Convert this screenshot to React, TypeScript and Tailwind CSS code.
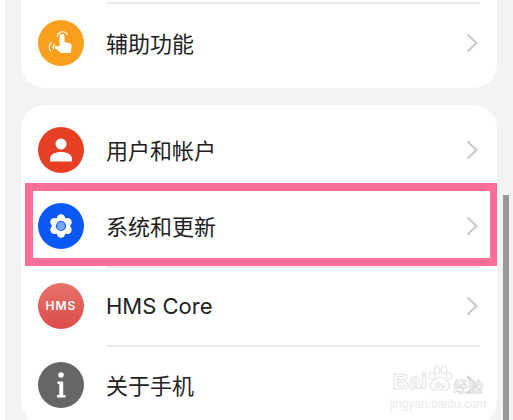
import type { ReactNode } from "react";

function Chevron() {
  return (
    <svg viewBox="0 0 12 20" className="h-[20px] w-[12px] shrink-0" fill="none" stroke="#c6c6c6" strokeWidth="1.800">
      <path d="M1.500 1.500L10.500 10L1.500 18.500" />
    </svg>
  );
}

function Row({ icon, label, height, divider, center, latin }: { icon: ReactNode; label: string; height: string; divider?: boolean; center?: string; latin?: boolean }) {
  return (
    <div className={`flex flex-col ${height}`}>
      {divider && <div className="ml-[85px] mr-[17px] h-[2px] bg-[#ebebeb]"></div>}
      <div className={`flex flex-1 items-center pl-[17px] pr-[19px] ${center ?? ""}`}>
        <div className="flex h-[46px] w-[46px] shrink-0 items-center justify-center rounded-full">{icon}</div>
        <span className={`ml-[22px] flex-1 text-[22px] leading-none text-[#222222] ${latin ? "font-[Inter]" : "pb-[3px]"}`}>{label}</span>
        <Chevron />
      </div>
    </div>
  );
}

const TouchIcon = (
  <svg viewBox="0 0 46 46" className="h-[46px] w-[46px]">
    <circle cx="23" cy="23" r="23" fill="#fba01e" />
    <path d="M21.500 26V16.500a2.500 2.500 0 0 1 5 0V22l5 1.300c1.500.4 2.300 1.600 2.100 3l-.9 6.700H23l-5.500-4.600c-1-.9-.6-2.300.7-2.500 1.100-.1 2.300.1 3.300.6z" fill="#fff" />
    <path d="M19.200 16.500a5.600 5.600 0 0 1 10.200-2.200" fill="none" stroke="#fff" strokeWidth="1.200" strokeLinecap="round" />
    <path d="M13.500 22.500c-2.500 2-3 5.500-1 8.500M16.500 24.500c-1.500 1.300-1.700 3-.8 4.500" fill="none" stroke="#fff" strokeWidth="1.200" strokeLinecap="round" />
  </svg>
);

const UserIcon = (
  <svg viewBox="0 0 46 46" className="h-[46px] w-[46px]">
    <circle cx="23" cy="23" r="23" fill="#e63f24" />
    <circle cx="23" cy="17" r="5.500" fill="#fff" />
    <path d="M12 34.500v-2.800c0-4.200 5-6.700 11-6.700s11 2.500 11 6.700v2.800z" fill="#fff" />
  </svg>
);

const GearIcon = (
  <svg viewBox="0 0 46 46" className="h-[46px] w-[46px]">
    <circle cx="23" cy="23" r="23" fill="#0a59f7" />
    <g fill="#fff">
      <circle cx="23" cy="23" r="9" />
      <circle cx="23" cy="15.500" r="4.200" />
      <circle cx="29.500" cy="19.250" r="4.200" />
      <circle cx="29.500" cy="26.750" r="4.200" />
      <circle cx="23" cy="30.500" r="4.200" />
      <circle cx="16.500" cy="26.750" r="4.200" />
      <circle cx="16.500" cy="19.250" r="4.200" />
    </g>
    <circle cx="23" cy="23" r="4.500" fill="#7da6fb" stroke="#0a59f7" strokeWidth="1.200" />
  </svg>
);

const InfoIcon = (
  <svg viewBox="0 0 46 46" className="h-[46px] w-[46px]">
    <circle cx="23" cy="23" r="23" fill="#666666" />
    <circle cx="23" cy="13" r="2.800" fill="#fff" />
    <path d="M19.500 19.500h5.700v13.500h2.300v2.500h-8.500V33h2.300V22h-1.800z" fill="#fff" />
  </svg>
);

function HmsIcon() {
  return (
    <div className="flex h-[46px] w-[46px] items-center justify-center rounded-full bg-gradient-to-b from-[#e6736a] to-[#dc4a49] font-[Inter] text-[12px] font-semibold leading-none tracking-[1px] text-white">
      HMS
    </div>
  );
}

function Watermark() {
  return (
    <div className="absolute left-[392px] top-[365px] flex w-[92px] flex-col items-center whitespace-nowrap font-['Liberation_Sans'] leading-none">
      <div className="flex items-end">
        <span className="text-[22px] font-bold text-white [-webkit-text-stroke:1px_#e6e6e6]">Bai</span>
        <svg viewBox="0 0 26 28" className="h-[28px] w-[26px] shrink-0" fill="none" stroke="#e6e6e6" strokeWidth="1.200">
          <ellipse cx="5" cy="11" rx="2.800" ry="3.500" />
          <ellipse cx="10" cy="5" rx="2.800" ry="3.800" />
          <ellipse cx="17" cy="5" rx="2.800" ry="3.800" />
          <ellipse cx="22" cy="11" rx="2.800" ry="3.500" />
          <path d="M13 12c4 0 5 3 8 5 3 3 1 9-4 8-3-.5-5-.5-8 0-5 1-7-5-4-8 3-2 4-5 8-5z" />
          <text x="13" y="23" fontSize="9" fontWeight="700" textAnchor="middle" fill="#e6e6e6" stroke="none">du</text>
        </svg>
        <span className="font-['Noto_Sans_CJK_SC'] text-[15px] text-white [-webkit-text-stroke:0.8px_#e2e2e2]">经验</span>
      </div>
      <span className="mt-[5px] text-[12px] text-[#ececec]">jingyan.baidu.com</span>
    </div>
  );
}

export default function App() {
  return (
    <div className="relative flex h-[420px] w-[513px] flex-col overflow-hidden bg-[#f1f3f5] pl-[21px] pr-[16px] font-['Noto_Sans_CJK_SC','Noto_Sans',sans-serif]">
      <div className="absolute inset-y-0 left-0 w-[5px] bg-white"></div>

      {/* top card, cut off by the screen edge */}
      <div className="shrink-0 rounded-b-[24px] bg-white">
        <div className="h-[2px]"></div>
        <Row divider height="h-[86px]" icon={TouchIcon} label="辅助功能" center="pb-[6px]" />
      </div>

      <div className="mt-[17px] shrink-0 rounded-[24px] bg-white">
        <Row height="h-[78px]" icon={UserIcon} label="用户和帐户" center="pt-[12px]" />
        <Row height="h-[83px]" icon={GearIcon} label="系统和更新" center="pt-[3px]" />
        <Row divider height="h-[79px]" icon={<HmsIcon />} label="HMS Core" latin center="pb-[2px]" />
        <Row divider height="h-[80px]" icon={InfoIcon} label="关于手机" center="pb-[2px]" />
      </div>

      {/* pink highlight drawn over the screenshot */}
      <div className="absolute left-[25px] top-[183px] h-[83px] w-[472px] border-y-[8px] border-r-[7px] border-l-[8px] border-[#fb6f98]"></div>

      {/* scrollbar */}
      <div className="absolute right-[4px] top-[195px] h-[225px] w-[6px] bg-[#999999]"></div>

      <Watermark />
    </div>
  );
}
